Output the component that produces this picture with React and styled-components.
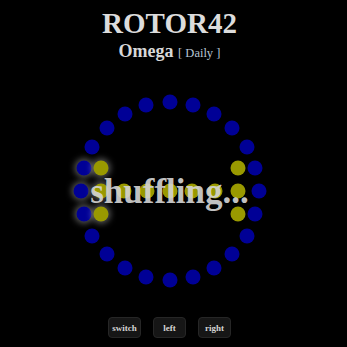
import React from 'react';
import styled, { createGlobalStyle } from 'styled-components';

const RING_COUNT = 24;
const RADIUS = 89;
const STEP = 22.67;
const GLOWING = [17, 18, 19];

const ring = Array.from({ length: RING_COUNT }, (_, i) => {
    const a = (i * 15 * Math.PI) / 180;
    return { x: RADIUS * Math.sin(a), y: -RADIUS * Math.cos(a), glow: GLOWING.includes(i) };
});

const inner = [
    { x: -3 * STEP, y: -23, glow: true },
    { x: -3 * STEP, y: 23, glow: true },
    { x: 3 * STEP, y: -23 },
    { x: 3 * STEP, y: 23 },
    ...Array.from({ length: 7 }, (_, i) => ({ x: (i - 3) * STEP, y: 0, glow: i === 0 })),
];

const App = () => {
    return (
        <>
            <GlobalStyle />
            <Page>
                <Title>ROTOR42</Title>
                <Subtitle>
                    Omega <Mode>[ Daily ]</Mode>
                </Subtitle>
                <Board>
                    {ring.map((d, i) => (
                        <Dot key={'r' + i} $glow={d.glow} style={{ left: 100 + d.x, top: 100 + d.y }} />
                    ))}
                    {inner.map((d, i) => (
                        <Dot key={'i' + i} $yellow $glow={d.glow} style={{ left: 100 + d.x, top: 100 + d.y }} />
                    ))}
                    <Status>shuffling...</Status>
                </Board>
                <Controls>
                    <Button>switch</Button>
                    <Button>left</Button>
                    <Button>right</Button>
                </Controls>
            </Page>
        </>
    );
}

export default App;

const GlobalStyle = createGlobalStyle`
    body {
        margin: 0;
        background: #000;
        font-family: "Liberation Serif", "Times New Roman", serif;
    }
`;

const Page = styled.div`
    width: 339px;
    display: flex;
    flex-direction: column;
    align-items: center;
`;

const Title = styled.h1`
    margin: 7px 0 0;
    font-size: 29px;
    line-height: 33px;
    font-weight: bold;
    color: #dcdcdc;
`;

const Subtitle = styled.h2`
    margin: 0;
    font-size: 18px;
    line-height: 22px;
    font-weight: bold;
    color: #d8d8d8;
`;

const Mode = styled.span`
    font-size: 12.5px;
    font-weight: normal;
    color: #b8c4d4;
`;

const Board = styled.div`
    position: relative;
    width: 200px;
    height: 200px;
    margin-top: 27px;
`;

const Dot = styled.div`
    position: absolute;
    width: 15px;
    height: 15px;
    border-radius: 50%;
    transform: translate(-50%, -50%);
    background: ${p => (p.$yellow ? '#999900' : '#000096')};
    box-shadow: ${p => (p.$glow ? '0 0 6px 2px rgba(255, 255, 255, 0.35)' : 'none')};
`;

const Status = styled.div`
    position: absolute;
    inset: 0;
    display: flex;
    align-items: center;
    justify-content: center;
    font-size: 35px;
    line-height: 35px;
    font-weight: bold;
    color: rgba(212, 212, 212, 0.92);
    white-space: nowrap;
`;

const Controls = styled.div`
    display: flex;
    gap: 12px;
    margin-top: 26px;
`;

const Button = styled.button`
    width: 33px;
    height: 21px;
    padding: 0;
    border: 1px solid #262626;
    border-radius: 4px;
    background: #161616;
    color: #d4d4d4;
    font-family: "Liberation Serif", serif;
    font-size: 9px;
    font-weight: bold;
`;
